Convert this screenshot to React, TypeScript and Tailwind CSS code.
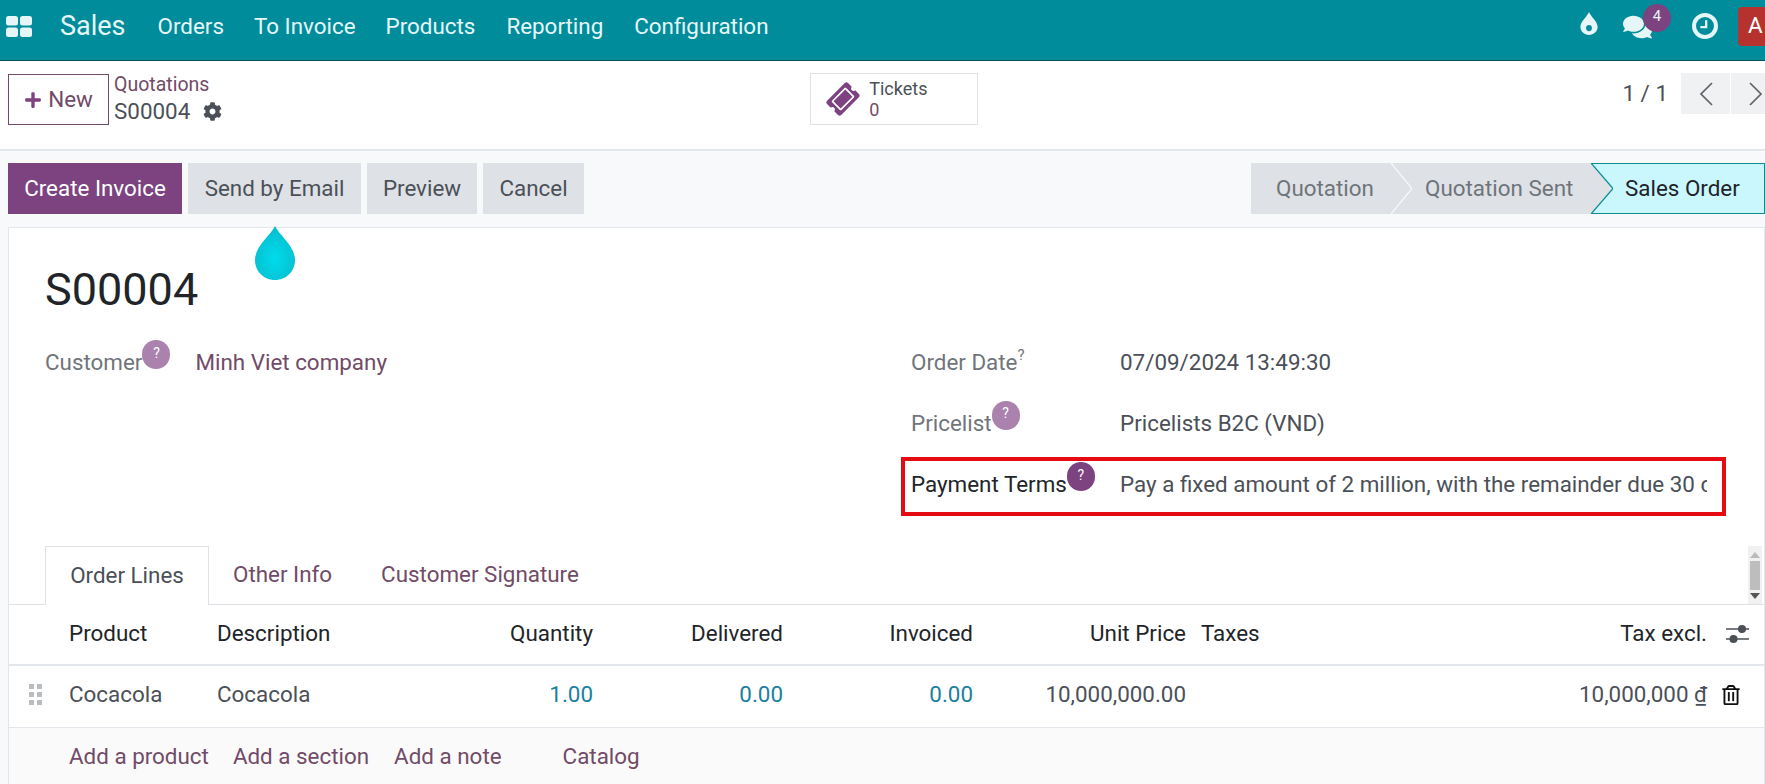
import React from "react";
import { FaCog, FaPlus, FaRegTrashAlt, FaTicketAlt, FaComments } from "react-icons/fa";

const Help = ({ dark, className = "" }: { dark?: boolean; className?: string }) => (
  <span className={`inline-flex h-[29px] w-[28px] shrink-0 translate-y-[-8px] items-center justify-center rounded-full pb-[3px] text-[14px] text-white ${dark ? "bg-[#7c4380]" : "bg-[#ab82ae]"} ${className}`}>?</span>
);

function Drop({ className = "" }: { className?: string }) {
  return (
    <svg viewBox="0 0 40 54" className={className}>
      <defs>
        <radialGradient id="dropg" cx="50%" cy="60%" r="55%">
          <stop offset="0%" stopColor="#00dcec" />
          <stop offset="100%" stopColor="#05bfd0" />
        </radialGradient>
      </defs>
      <path d="M20 0C24 9 40 20 40 34C40 45.5 31 54 20 54C9 54 0 45.5 0 34C0 20 16 9 20 0Z" fill="url(#dropg)" />
    </svg>
  );
}

export default function App() {
  return (
    <div className="flex h-[784px] w-[1765px] flex-col overflow-hidden bg-[#f8f9fa] font-['Roboto',sans-serif] text-[22.4px] text-[#4b5058]">
      <nav className="flex h-[61px] shrink-0 items-center border-b border-[#04525c] bg-[#008c9b] pb-[6px] text-[#e6f7f8]">
        <svg viewBox="0 0 26 21" className="mb-[2px] ml-[6px] h-[21px] w-[26px]" fill="#e6f5f6">
          <rect x="0" y="0" width="12" height="9.5" rx="2.5" />
          <rect x="14" y="0" width="12" height="9.5" rx="2.5" />
          <rect x="0" y="11.5" width="12" height="9.5" rx="2.5" />
          <rect x="14" y="11.5" width="12" height="9.5" rx="2.5" />
        </svg>
        <span className="mb-[2px] ml-[28px] text-[27px]">Sales</span>
        <span className="ml-[32px]">Orders</span>
        <span className="ml-[30px]">To Invoice</span>
        <span className="ml-[30px]">Products</span>
        <span className="ml-[31px]">Reporting</span>
        <span className="ml-[31px]">Configuration</span>
        <div className="mb-[2px] ml-auto flex items-center">
          <svg viewBox="0 0 18 24" className="mt-[-5px] h-[23px] w-[18px]" fill="#e6f5f6">
            <path fillRule="evenodd" d="M9 0C11 5 18 10 18 15.5C18 20.5 14 24 9 24C4 24 0 20.5 0 15.5C0 10 7 5 9 0ZM9 13.5A3 3.2 0 1 0 9 20A3 3.2 0 1 0 9 13.5Z" />
          </svg>
          <div className="relative ml-[25px] h-[23px] w-[29px]">
            <FaComments className="h-[26px] w-[29px] translate-y-[-1px] text-[#e6f5f6]" />
            <span className="absolute left-[20px] top-[-11px] flex h-[28px] w-[28px] items-center justify-center rounded-full bg-[#7c4380] pb-[3px] text-[15px]">4</span>
          </div>
          <span className="ml-[40px] flex h-[26px] w-[26px] items-center justify-center rounded-full border-[4px] border-[#e6f5f6]">
            <svg viewBox="0 0 12 12" className="h-[14px] w-[14px]" fill="none" stroke="#e6f5f6" strokeWidth="2"><path d="M7 1V7H2" /></svg>
          </span>
          <span className="ml-[20px] flex h-[39px] w-[27px] items-center overflow-hidden rounded-l-[4px] bg-[#b5322f] pl-[10px] text-white">A</span>
        </div>
      </nav>

      <header className="flex h-[90px] shrink-0 items-start border-b-2 border-[#e3e6ea] bg-white">
        <button className="ml-[8px] mt-[13px] flex h-[51px] w-[101px] items-center justify-center gap-[6px] border border-[#714b67] text-[#714b67]">
          <FaPlus className="h-[18px] w-[18px] text-[#7c4380]" />
          New
        </button>
        <div className="ml-[5px] mt-[10px] leading-[27px]">
          <div className="text-[19.5px] text-[#714b67]">Quotations</div>
          <div className="flex items-center gap-[13px]">S00004 <FaCog className="h-[19px] w-[19px]" /></div>
        </div>
        <div className="ml-[588px] mt-[12px] flex h-[52px] w-[168px] items-center border border-[#dee2e6]">
          <FaTicketAlt className="ml-[17px] h-[30px] w-[30px] -rotate-45 text-[#7c4380]" />
          <div className="ml-[11px] text-[18px] leading-[21px]">
            <div>Tickets</div>
            <div className="text-[#714b67]">0</div>
          </div>
        </div>
        <div className="ml-auto mt-[12px] flex items-center">
          <span className="mr-[13px] text-[22.4px]">1 / 1</span>
          <span className="flex h-[41px] w-[49px] items-center justify-center bg-[#f0f1f2]">
            <svg viewBox="0 0 16 26" className="h-[26px] w-[16px]" fill="none" stroke="#5f6368" strokeWidth="1.7"><path d="M14 2L3 13L14 24" /></svg>
          </span>
          <span className="ml-[1px] flex h-[41px] w-[34px] items-center bg-[#f0f1f2] pl-[17px]">
            <svg viewBox="0 0 16 26" className="h-[26px] w-[16px] shrink-0" fill="none" stroke="#5f6368" strokeWidth="1.7"><path d="M2 2L13 13L2 24" /></svg>
          </span>
        </div>
      </header>

      <div className="flex h-[76px] shrink-0 items-start pt-[12px]">
        <div className="ml-[8px] flex gap-[6px]">
          <button className="flex h-[51px] w-[174px] items-center justify-center bg-[#7c4380] text-white">Create Invoice</button>
          <button className="flex h-[51px] w-[173px] items-center justify-center bg-[#dee2e6]">Send by Email</button>
          <button className="flex h-[51px] w-[110px] items-center justify-center bg-[#dee2e6]">Preview</button>
          <button className="flex h-[51px] w-[101px] items-center justify-center bg-[#dee2e6]">Cancel</button>
        </div>
        <div className="ml-auto flex h-[51px] w-[514px] items-stretch text-[#6f747b]">
          <div className="flex w-[140px] items-center bg-[#dee2e6] pl-[25px]">Quotation</div>
          <svg viewBox="0 0 21 51" className="h-[51px] w-[21px] shrink-0" preserveAspectRatio="none">
            <rect width="21" height="51" fill="#dee2e6" />
            <path d="M0 0L21 25.5L0 51" fill="none" stroke="#f8f9fa" strokeWidth="1.2" />
          </svg>
          <div className="flex w-[179px] items-center bg-[#dee2e6] pl-[13px]">Quotation Sent</div>
          <svg viewBox="0 0 22 51" className="h-[51px] w-[22px] shrink-0" preserveAspectRatio="none">
            <path d="M0 0H22V51H0L22 25.5Z" fill="#c9f7fd" />
            <path d="M0 0L22 25.5L0 51" fill="#dee2e6" stroke="#0d8c96" strokeWidth="1.2" />
            <path d="M0 0.5H22M0 50.5H22" stroke="#0d8c96" strokeWidth="1" />
          </svg>
          <div className="flex flex-1 items-center border-y border-r border-[#0d8c96] bg-[#c9f7fd] pl-[12px] text-[#1f2328]">Sales Order</div>
        </div>
      </div>

      <main className="relative ml-[8px] h-[560px] shrink-0 border border-[#e3e6ea] bg-white">
        <Drop className="absolute left-[246px] top-[-2px] h-[54px] w-[40px]" />
        <div className="pl-[36px] pt-[33px] text-[45px] leading-[58px] text-[#212529]">S00004</div>
        <div className="mt-[13px] flex">
          <div className="flex h-[61px] w-[893px] items-center pl-[36px]">
            <span className="text-[#71757b]">Customer</span>
            <Help className="mr-[25px]" />
            <span className="mt-[1px] text-[#714b67]">Minh Viet company</span>
          </div>
          <div className="w-[823px]">
            <div className="flex h-[61px] items-center pl-[9px]">
              <span className="flex w-[209px] text-[#71757b]">Order Date<sup className="mt-[17px] text-[15px]">?</sup></span>
              <span>07/09/2024 13:49:30</span>
            </div>
            <div className="flex h-[61px] items-center pl-[9px]">
              <span className="flex w-[209px] items-center"><span className="text-[#71757b]">Pricelist</span><Help /></span>
              <span>Pricelists B2C (VND)</span>
            </div>
            <div className="ml-[-1px] mt-[3px] flex h-[59px] w-[825px] items-center border-[4px] border-[#e60b12] pb-[3px] pl-[6px]">
              <span className="flex w-[209px] items-center"><span className="text-[#212529]">Payment Terms</span><Help dark /></span>
              <span className="w-[587px] overflow-hidden whitespace-nowrap">Pay a fixed amount of 2 million, with the remainder due 30 days after the invoice date</span>
            </div>
          </div>
        </div>

        <div className="mt-[30px] flex h-[59px] items-center border-b border-[#dee2e6]">
          <div className="ml-[36px] flex h-[59px] w-[164px] items-center justify-center self-start border border-b-0 border-[#dee2e6] bg-white">Order Lines</div>
          <span className="ml-[24px] text-[#714b67]">Other Info</span>
          <span className="ml-[49px] text-[#714b67]">Customer Signature</span>
          <div className="ml-auto mr-[2px] flex h-[58px] w-[14px] flex-col items-center self-start bg-[#f1f1f1]">
            <span className="mt-[6px] h-0 w-0 border-x-[5px] border-b-[6px] border-x-transparent border-b-[#bbb]"></span>
            <span className="mt-[3px] h-[29px] w-[10px] bg-[#bdbdbd]"></span>
            <span className="mt-[3px] h-0 w-0 border-x-[5px] border-t-[6px] border-x-transparent border-t-[#555]"></span>
          </div>
        </div>

        <div className="grid h-[61px] grid-cols-[60px_148px_233px_143px_190px_190px_213px_314px_207px_1fr] items-center border-b-2 border-[#e3e6ea] pb-[2px] text-[#212529]">
          <span></span>
          <span>Product</span>
          <span>Description</span>
          <span className="text-right">Quantity</span>
          <span className="text-right">Delivered</span>
          <span className="text-right">Invoiced</span>
          <span className="text-right">Unit Price</span>
          <span className="pl-[15px]">Taxes</span>
          <span className="text-right">Tax excl.</span>
          <svg viewBox="0 0 23 20" className="ml-[19px] h-[20px] w-[23px]">
            <path d="M0 5H23M0 15H23" stroke="#4b5058" strokeWidth="1.6" />
            <circle cx="16" cy="5" r="4" fill="#4b5058" />
            <circle cx="7.5" cy="15" r="4" fill="#4b5058" />
          </svg>
        </div>

        <div className="grid h-[62px] grid-cols-[60px_148px_233px_143px_190px_190px_213px_314px_207px_1fr] items-center border-b border-[#e3e6ea] pb-[4px]">
          <svg viewBox="0 0 13 21" className="ml-[20px] h-[21px] w-[13px]" fill="#b9bdc1">
            <rect x="0" y="0" width="5" height="5" />
            <rect x="8" y="0" width="5" height="5" />
            <rect x="0" y="8" width="5" height="5" />
            <rect x="8" y="8" width="5" height="5" />
            <rect x="0" y="16" width="5" height="5" />
            <rect x="8" y="16" width="5" height="5" />
          </svg>
          <span>Cocacola</span>
          <span>Cocacola</span>
          <span className="text-right text-[#1b7f9e]">1.00</span>
          <span className="text-right text-[#1b7f9e]">0.00</span>
          <span className="text-right text-[#1b7f9e]">0.00</span>
          <span className="text-right">10,000,000.00</span>
          <span></span>
          <span className="text-right">10,000,000 ₫</span>
          <FaRegTrashAlt className="ml-[15px] h-[20px] w-[18px] text-[#111]" />
        </div>

        <div className="flex h-full items-start bg-[#fafafa] pl-[60px] pt-[12px] text-[#714b67]">
          <span>Add a product</span>
          <span className="ml-[24px]">Add a section</span>
          <span className="ml-[25px]">Add a note</span>
          <span className="ml-[61px]">Catalog</span>
        </div>
      </main>
    </div>
  );
}
